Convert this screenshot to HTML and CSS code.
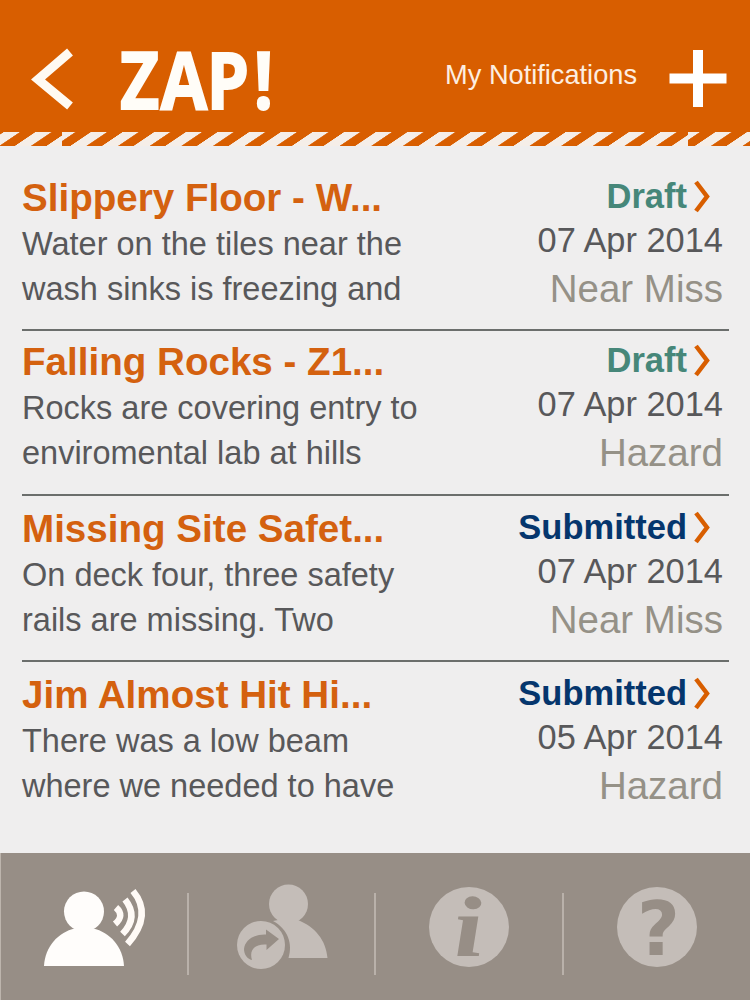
FILE: index.html
```html
<!DOCTYPE html>
<html lang="en">
<head>
    <meta charset="UTF-8">
    <meta name="viewport" content="width=device-width, initial-scale=1.0">
    <title>ZAP! - My Notifications</title>
    <link rel="stylesheet" href="styles.css">
</head>
<body>

    <header class="header">
        <svg class="back" width="44" height="64" viewBox="0 0 44 64">
            <path d="M38 4 L6 31.500 L38 58" />
        </svg>
        <svg class="logo" width="160" height="70" viewBox="0 0 160 70">
            <text x="0 47 100.500 155.600" y="62.500" transform="scale(0.86 1)">ZAP!</text>
        </svg>
        <span class="page-name">My Notifications</span>
        <svg class="add" width="58" height="58" viewBox="0 0 58 58">
            <path d="M29 0 V57 M0.500 28.500 H57.500" />
        </svg>
    </header>

    <!-- hazard tape -->
    <svg class="tape" width="750" height="14" viewBox="0 0 750 14">
        <defs>
            <pattern id="tape-a" width="31.65" height="20" patternUnits="userSpaceOnUse" patternTransform="translate(35.5 0) skewX(-56)">
                <rect width="16" height="20" />
            </pattern>
            <pattern id="tape-b" width="31.65" height="20" patternUnits="userSpaceOnUse" patternTransform="translate(91 0) skewX(-56)">
                <rect width="16" height="20" />
            </pattern>
            <pattern id="tape-c" width="31.65" height="20" patternUnits="userSpaceOnUse" patternTransform="translate(715.5 0) skewX(-56)">
                <rect width="16" height="20" />
            </pattern>
        </defs>
        <rect width="62" height="14" fill="url(#tape-a)" />
        <rect x="62" width="626" height="14" fill="url(#tape-b)" />
        <rect x="688" width="62" height="14" fill="url(#tape-c)" />
    </svg>

    <main class="list">
        <article class="item">
            <div class="info">
                <h2 class="title">Slippery Floor - W...</h2>
                <p class="text">Water on the tiles near the<br>wash sinks is freezing and</p>
            </div>
            <div class="meta">
                <div class="status draft">Draft
                    <svg class="arrow" width="18" height="34" viewBox="0 0 18 34"><path d="M3 3 L14 17.500 L3 32" /></svg>
                </div>
                <div class="date">07 Apr 2014</div>
                <div class="type">Near Miss</div>
            </div>
        </article>
        <article class="item">
            <div class="info">
                <h2 class="title">Falling Rocks - Z1...</h2>
                <p class="text">Rocks are covering entry to<br>enviromental lab at hills</p>
            </div>
            <div class="meta">
                <div class="status draft">Draft
                    <svg class="arrow" width="18" height="34" viewBox="0 0 18 34"><path d="M3 3 L14 17.500 L3 32" /></svg>
                </div>
                <div class="date">07 Apr 2014</div>
                <div class="type">Hazard</div>
            </div>
        </article>
        <article class="item">
            <div class="info">
                <h2 class="title">Missing Site Safet...</h2>
                <p class="text">On deck four, three safety<br>rails are missing. Two</p>
            </div>
            <div class="meta">
                <div class="status submitted">Submitted
                    <svg class="arrow" width="18" height="34" viewBox="0 0 18 34"><path d="M3 3 L14 17.500 L3 32" /></svg>
                </div>
                <div class="date">07 Apr 2014</div>
                <div class="type">Near Miss</div>
            </div>
        </article>
        <article class="item">
            <div class="info">
                <h2 class="title">Jim Almost Hit Hi...</h2>
                <p class="text">There was a low beam<br>where we needed to have</p>
            </div>
            <div class="meta">
                <div class="status submitted">Submitted
                    <svg class="arrow" width="18" height="34" viewBox="0 0 18 34"><path d="M3 3 L14 17.500 L3 32" /></svg>
                </div>
                <div class="date">05 Apr 2014</div>
                <div class="type">Hazard</div>
            </div>
        </article>
    </main>

    <nav class="tabs">
        <a class="tab active">
            <svg width="186" height="82" viewBox="0 0 186 82">
                <circle cx="83" cy="18.500" r="20" />
                <path d="M43 73 C44 54 57 39 74 35.500 H92 C109 39 122 54 123 73 Z" />
                <g class="waves">
                    <path d="M115 14.500 Q124 22.500 114 31" />
                    <path d="M124 6.500 Q138 24 121.500 41" />
                    <path d="M132 -2 Q152 22 126.500 51" />
                </g>
            </svg>
        </a>
        <a class="tab">
            <svg width="186" height="82" viewBox="0 0 186 82">
                <circle cx="99.500" cy="11" r="19.500" />
                <path d="M89 27 H109 C126 34 137 47 138.500 65 H99.500 C104 51 99 36 84 28 Z" />
                <circle cx="72" cy="52" r="24" />
                <path class="cut" d="M55 56 C56 47 65 41 77 41.500 V36.500 L90 46 L77.500 57 V51.500 C65 50.500 60 58 63 67 C58 66 55 61 55 56 Z" />
            </svg>
        </a>
        <a class="tab">
            <svg width="186" height="82" viewBox="0 0 186 82">
                <circle cx="93" cy="34" r="40" />
                <text class="glyph-i" transform="translate(78.500 63) skewX(4) scale(1.3 1)">i</text>
            </svg>
        </a>
        <a class="tab">
            <svg width="186" height="82" viewBox="0 0 186 82">
                <circle cx="93" cy="34" r="40" />
                <text class="glyph-q" x="73" y="62">?</text>
            </svg>
        </a>
    </nav>

</body>
</html>
```
FILE: styles.css
```css
* {
    box-sizing: border-box;
}
body {
    margin: 0;
    width: 750px;
    height: 1000px;
    display: flex;
    flex-direction: column;
    background-color: #efeeee;
    font-family: "Liberation Sans", Arial, sans-serif;
    overflow: hidden;
}
svg {
    display: block;
    flex: none;
    overflow: visible;
}

/* Header */
.header {
    display: flex;
    align-items: flex-start;
    height: 132px;
    padding: 48px 23px 0 32px;
    background-color: #d85e00;
    color: #fff;
}
.back path {
    fill: none;
    stroke: #fffaf2;
    stroke-width: 9;
}
.logo {
    margin: -2px 0 0 44px;
}
.logo text {
    font-family: "Open Sans", sans-serif;
    font-size: 79px;
    font-weight: 700;
    fill: #fffdf8;
    stroke: #fffdf8;
    stroke-width: 1.8px;
}
.page-name {
    margin: 12px 32px 0 auto;
    font-size: 27.2px;
    line-height: 30px;
    color: #fdeee0;
}
.add {
    margin-top: 2px;
}
.add path {
    fill: none;
    stroke: #fff;
    stroke-width: 10;
}
.tape {
    background-color: #d85e00;
}
.tape pattern rect {
    fill: #f5eee8;
}

/* Notifications */
.list {
    flex: 1;
    padding: 19px 21px 0 22px;
}
.item {
    display: flex;
    justify-content: space-between;
    height: 165.5px;
    padding-top: 11px;
    border-bottom: 2px solid #6b6e6c;
}
.item:nth-child(2) {
    padding-top: 9px;
}
.item:last-child {
    border-bottom: none;
}
.title {
    margin: 0 0 2px;
    font-size: 38.6px;
    line-height: 44px;
    color: #d4610f;
    white-space: nowrap;
}
.text {
    margin: 0;
    font-size: 32.5px;
    line-height: 45px;
    color: #58585a;
    white-space: nowrap;
}
.meta {
    padding-right: 6px;
    text-align: right;
    white-space: nowrap;
}
.status {
    display: flex;
    justify-content: flex-end;
    align-items: center;
    gap: 6px;
    padding-right: 12px;
    font-size: 34.5px;
    font-weight: 700;
    line-height: 40px;
}
.draft {
    color: #468779;
}
.submitted {
    color: #05366d;
}
.arrow path {
    fill: none;
    stroke: #d85e00;
    stroke-width: 4.5;
}
.date {
    font-size: 34.4px;
    line-height: 48px;
    color: #58585a;
}
.type {
    font-size: 38.5px;
    line-height: 50px;
    color: #959187;
}

/* Bottom tabs */
.tabs {
    display: flex;
    height: 147px;
    padding-top: 40px;
    border-left: 1px solid #bdb5ad;
    background-color: #978e86;
}
.tab {
    width: 187.5px;
    height: 82px;
    border-right: 2px solid #b9b1aa;
    fill: #c4bdb8;
}
.tab:last-child {
    border-right: none;
}
.active {
    fill: #fffdfb;
}
.waves {
    fill: none;
    stroke: #fffaf6;
    stroke-width: 6.5;
}
.cut,
.glyph-i,
.glyph-q {
    fill: #978e86;
}
.glyph-i {
    font-family: "Liberation Serif", serif;
    font-size: 86px;
    font-weight: 700;
    font-style: italic;
}
.glyph-q {
    font-family: "DejaVu Sans", sans-serif;
    font-size: 74px;
    font-weight: 700;
}
```
